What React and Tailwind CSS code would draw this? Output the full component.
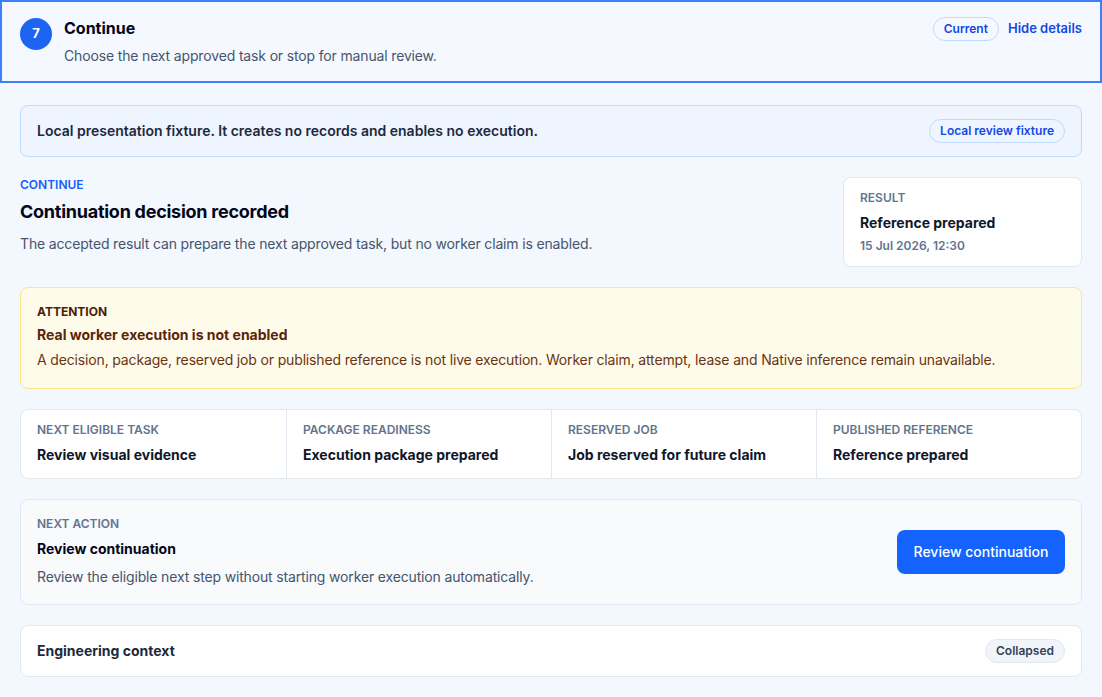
export default function App() {
  const facts = [
    { label: 'Next eligible task', value: 'Review visual evidence' },
    { label: 'Package readiness', value: 'Execution package prepared' },
    { label: 'Reserved job', value: 'Job reserved for future claim' },
    { label: 'Published reference', value: 'Reference prepared' },
  ];

  return (
    <div className="min-h-screen bg-[#f3f7fe] font-['Inter',sans-serif] text-slate-900">
      {/* step header */}
      <div className="flex items-start gap-3 border-2 border-[#3b82f6] bg-[#f5f9ff] px-[18px] pt-[14px] pb-[15px]">
        <div className="mt-[2px] flex h-8 w-8 shrink-0 items-center justify-center rounded-full bg-[#1d64f2] text-[13px] font-bold text-white">
          7
        </div>
        <div className="flex-1">
          <h2 className="text-base leading-6 font-bold text-slate-950">Continue</h2>
          <p className="mt-[6px] text-sm leading-5 tracking-[-0.011em] text-slate-600">Choose the next approved task or stop for manual review.</p>
        </div>
        <div className="flex items-center gap-[9px] pt-[1px]">
          <span className="rounded-full border border-blue-200 px-[10px] py-[3px] text-xs font-semibold text-blue-700">Current</span>
          <button className="text-[13px] font-semibold text-blue-700">Hide details</button>
        </div>
      </div>

      <div className="flex flex-col gap-5 px-5 pt-[22px] pb-5">
        {/* fixture banner */}
        <div className="flex h-[52px] items-center justify-between rounded-lg border border-blue-200 bg-[#eef5ff] px-4">
          <p className="text-sm font-semibold text-slate-800">Local presentation fixture. It creates no records and enables no execution.</p>
          <span className="rounded-full border border-blue-200 px-[10px] py-[3px] text-xs font-semibold text-blue-700">Local review fixture</span>
        </div>

        {/* decision */}
        <div className="flex items-start justify-between gap-6">
          <div>
            <div className="text-xs leading-4 font-semibold text-blue-600 uppercase">Continue</div>
            <h3 className="mt-[7px] text-lg leading-6 font-bold tracking-[-0.014em] text-slate-950">Continuation decision recorded</h3>
            <p className="mt-[10px] text-sm leading-5 tracking-[-0.011em] text-slate-600">The accepted result can prepare the next approved task, but no worker claim is enabled.</p>
          </div>
          <div className="w-[239px] shrink-0 rounded-lg border border-slate-200 bg-white px-4 pt-[12px] pb-[12px]">
            <div className="text-xs leading-4 font-semibold text-slate-500 uppercase">Result</div>
            <div className="mt-[7px] text-sm leading-5 font-bold text-slate-900">Reference prepared</div>
            <div className="mt-[5px] text-xs leading-4 font-semibold text-slate-500">15 Jul 2026, 12:30</div>
          </div>
        </div>

        {/* attention */}
        <div className="rounded-lg border border-[#fde68a] bg-[#fffbea] px-4 pt-[16px] pb-[18px]">
          <div className="text-xs leading-4 font-bold text-[#4a1d06] uppercase">Attention</div>
          <div className="mt-[5px] text-sm leading-5 font-bold text-[#5a250a]">Real worker execution is not enabled</div>
          <p className="mt-[5px] text-sm leading-5 tracking-[-0.011em] text-[#6b3410]">A decision, package, reserved job or published reference is not live execution. Worker claim, attempt, lease and Native inference remain unavailable.</p>
        </div>

        {/* facts grid */}
        <div className="grid grid-cols-4 overflow-hidden rounded-lg border border-slate-200 bg-white">
          {facts.map((f, i) => (
            <div key={f.label} className={`h-[68px] px-4 pt-[12px] ${i > 0 ? 'border-l border-slate-200' : ''}`}>
              <div className="text-xs leading-4 font-semibold text-slate-500 uppercase">{f.label}</div>
              <div className="mt-[7px] text-sm leading-5 font-bold text-slate-900">{f.value}</div>
            </div>
          ))}
        </div>

        {/* next action */}
        <div className="flex items-center justify-between rounded-lg border border-slate-200 bg-[#f8fafc] px-4 pt-[16px] pb-[17px]">
          <div>
            <div className="text-xs leading-4 font-semibold text-slate-500 uppercase">Next action</div>
            <div className="mt-[7px] text-sm leading-5 font-bold text-slate-950">Review continuation</div>
            <p className="mt-[8px] text-sm leading-5 tracking-[-0.011em] text-slate-600">Review the eligible next step without starting worker execution automatically.</p>
          </div>
          <button className="h-11 w-[168px] rounded-lg bg-[#1563ff] text-sm font-medium text-white">Review continuation</button>
        </div>

        {/* engineering context */}
        <div className="flex h-[52px] items-center justify-between rounded-lg border border-slate-200 bg-white px-4">
          <div className="text-sm font-bold text-slate-800">Engineering context</div>
          <span className="rounded-full border border-slate-200 bg-slate-100 px-[10px] py-[3px] text-xs font-semibold text-slate-700">Collapsed</span>
        </div>
      </div>
    </div>
  );
}
